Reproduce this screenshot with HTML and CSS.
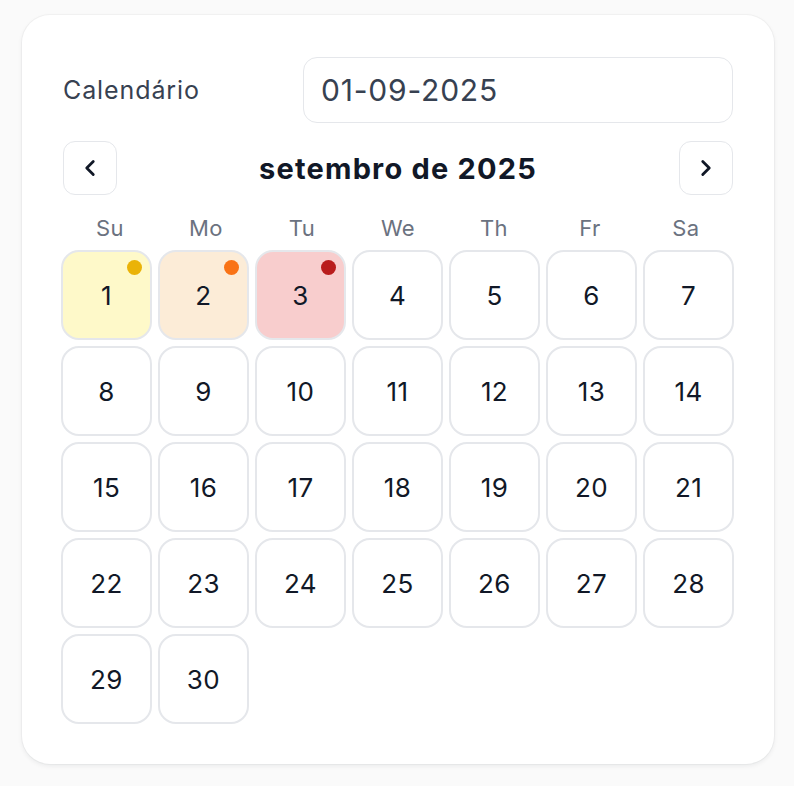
FILE: index.html
```html
<!DOCTYPE html>
<html lang="pt">
<head>
<meta charset="utf-8">
<title>Calendário</title>
<link rel="stylesheet" href="styles.css">
</head>
<body>
<div class="card">
  <div class="field">
    <label class="label" for="date">Calendário</label>
    <input id="date" class="date-input" type="text" value="01-09-2025">
  </div>
  <div class="nav">
    <button class="nav-btn" aria-label="Mês anterior">
      <svg viewBox="0 0 24 24" width="26" height="26" fill="none" stroke="currentColor" stroke-width="2.6" stroke-linecap="round" stroke-linejoin="round"><path d="M15 18l-6-6 6-6"/></svg>
    </button>
    <div class="month">setembro de 2025</div>
    <button class="nav-btn" aria-label="Próximo mês">
      <svg viewBox="0 0 24 24" width="26" height="26" fill="none" stroke="currentColor" stroke-width="2.6" stroke-linecap="round" stroke-linejoin="round"><path d="M9 18l6-6-6-6"/></svg>
    </button>
  </div>
  <div class="weekdays">
    <span>Su</span><span>Mo</span><span>Tu</span><span>We</span><span>Th</span><span>Fr</span><span>Sa</span>
  </div>
  <div class="days">
    <div class="day day-yellow">1<span class="dot dot-yellow"></span></div>
    <div class="day day-orange">2<span class="dot dot-orange"></span></div>
    <div class="day day-red">3<span class="dot dot-red"></span></div>
    <div class="day">4</div>
    <div class="day">5</div>
    <div class="day">6</div>
    <div class="day">7</div>
    <div class="day">8</div>
    <div class="day">9</div>
    <div class="day">10</div>
    <div class="day">11</div>
    <div class="day">12</div>
    <div class="day">13</div>
    <div class="day">14</div>
    <div class="day">15</div>
    <div class="day">16</div>
    <div class="day">17</div>
    <div class="day">18</div>
    <div class="day">19</div>
    <div class="day">20</div>
    <div class="day">21</div>
    <div class="day">22</div>
    <div class="day">23</div>
    <div class="day">24</div>
    <div class="day">25</div>
    <div class="day">26</div>
    <div class="day">27</div>
    <div class="day">28</div>
    <div class="day">29</div>
    <div class="day">30</div>
  </div>
</div>
</body>
</html>
```

FILE: styles.css
```css
* { box-sizing: border-box; }

html, body {
  margin: 0;
  background: #fafafa;
}

body {
  padding: 15px 20px 22px 22px;
  font-family: Inter, "Liberation Sans", sans-serif;
  color: #111827;
}

.card {
  width: 752px;
  height: 749px;
  background: #ffffff;
  border-radius: 28px;
  padding: 42px 40px 40px 39px;
  box-shadow: 0 0 0 1px rgba(17, 24, 39, 0.03), 0 2px 5px rgba(17, 24, 39, 0.07);
}

.field {
  display: flex;
  align-items: center;
  justify-content: space-between;
}

.label {
  font-size: 25px;
  letter-spacing: 0.9px;
  color: #374151;
  margin-left: 2px;
}

.date-input {
  width: 430px;
  height: 66px;
  margin-right: 1px;
  border: 1.5px solid #e5e7eb;
  border-radius: 14px;
  padding: 0 17px;
  font-family: inherit;
  font-size: 30px;
  letter-spacing: 0.8px;
  color: #374151;
  background: #fff;
  outline: none;
}

.nav {
  margin-top: 18px;
  display: flex;
  align-items: center;
  justify-content: space-between;
  padding: 0 1px 0 2px;
}

.nav-btn {
  width: 54px;
  height: 54px;
  border: 1.5px solid #e5e7eb;
  border-radius: 12px;
  background: #fff;
  color: #111827;
  display: flex;
  align-items: center;
  justify-content: center;
  padding: 0;
}

.month {
  font-size: 29px;
  font-weight: 700;
  letter-spacing: 1.2px;
  color: #111827;
}

.weekdays {
  margin-top: 19px;
  margin-left: 1px;
  display: grid;
  grid-template-columns: repeat(7, 96px);
  line-height: 28px;
  font-size: 22px;
  letter-spacing: 0.4px;
  color: #6b7280;
  text-align: center;
}

.days {
  margin-top: 8px;
  display: grid;
  grid-template-columns: repeat(7, 1fr);
  grid-auto-rows: 90px;
  gap: 6px;
}

.day {
  position: relative;
  border: 2px solid #e5e7eb;
  border-radius: 18px;
  display: flex;
  align-items: center;
  justify-content: center;
  font-size: 26px;
  letter-spacing: 0.4px;
  color: #111827;
  background: #fff;
}

.day-yellow { background: #fef9c9; }
.day-orange { background: #fcecd7; }
.day-red { background: #f8cdcd; }

.dot {
  position: absolute;
  top: 8px;
  right: 8px;
  width: 15px;
  height: 15px;
  border-radius: 50%;
}

.dot-yellow { background: #eab308; }
.dot-orange { background: #f97316; }
.dot-red { background: #b91c1c; }
```
